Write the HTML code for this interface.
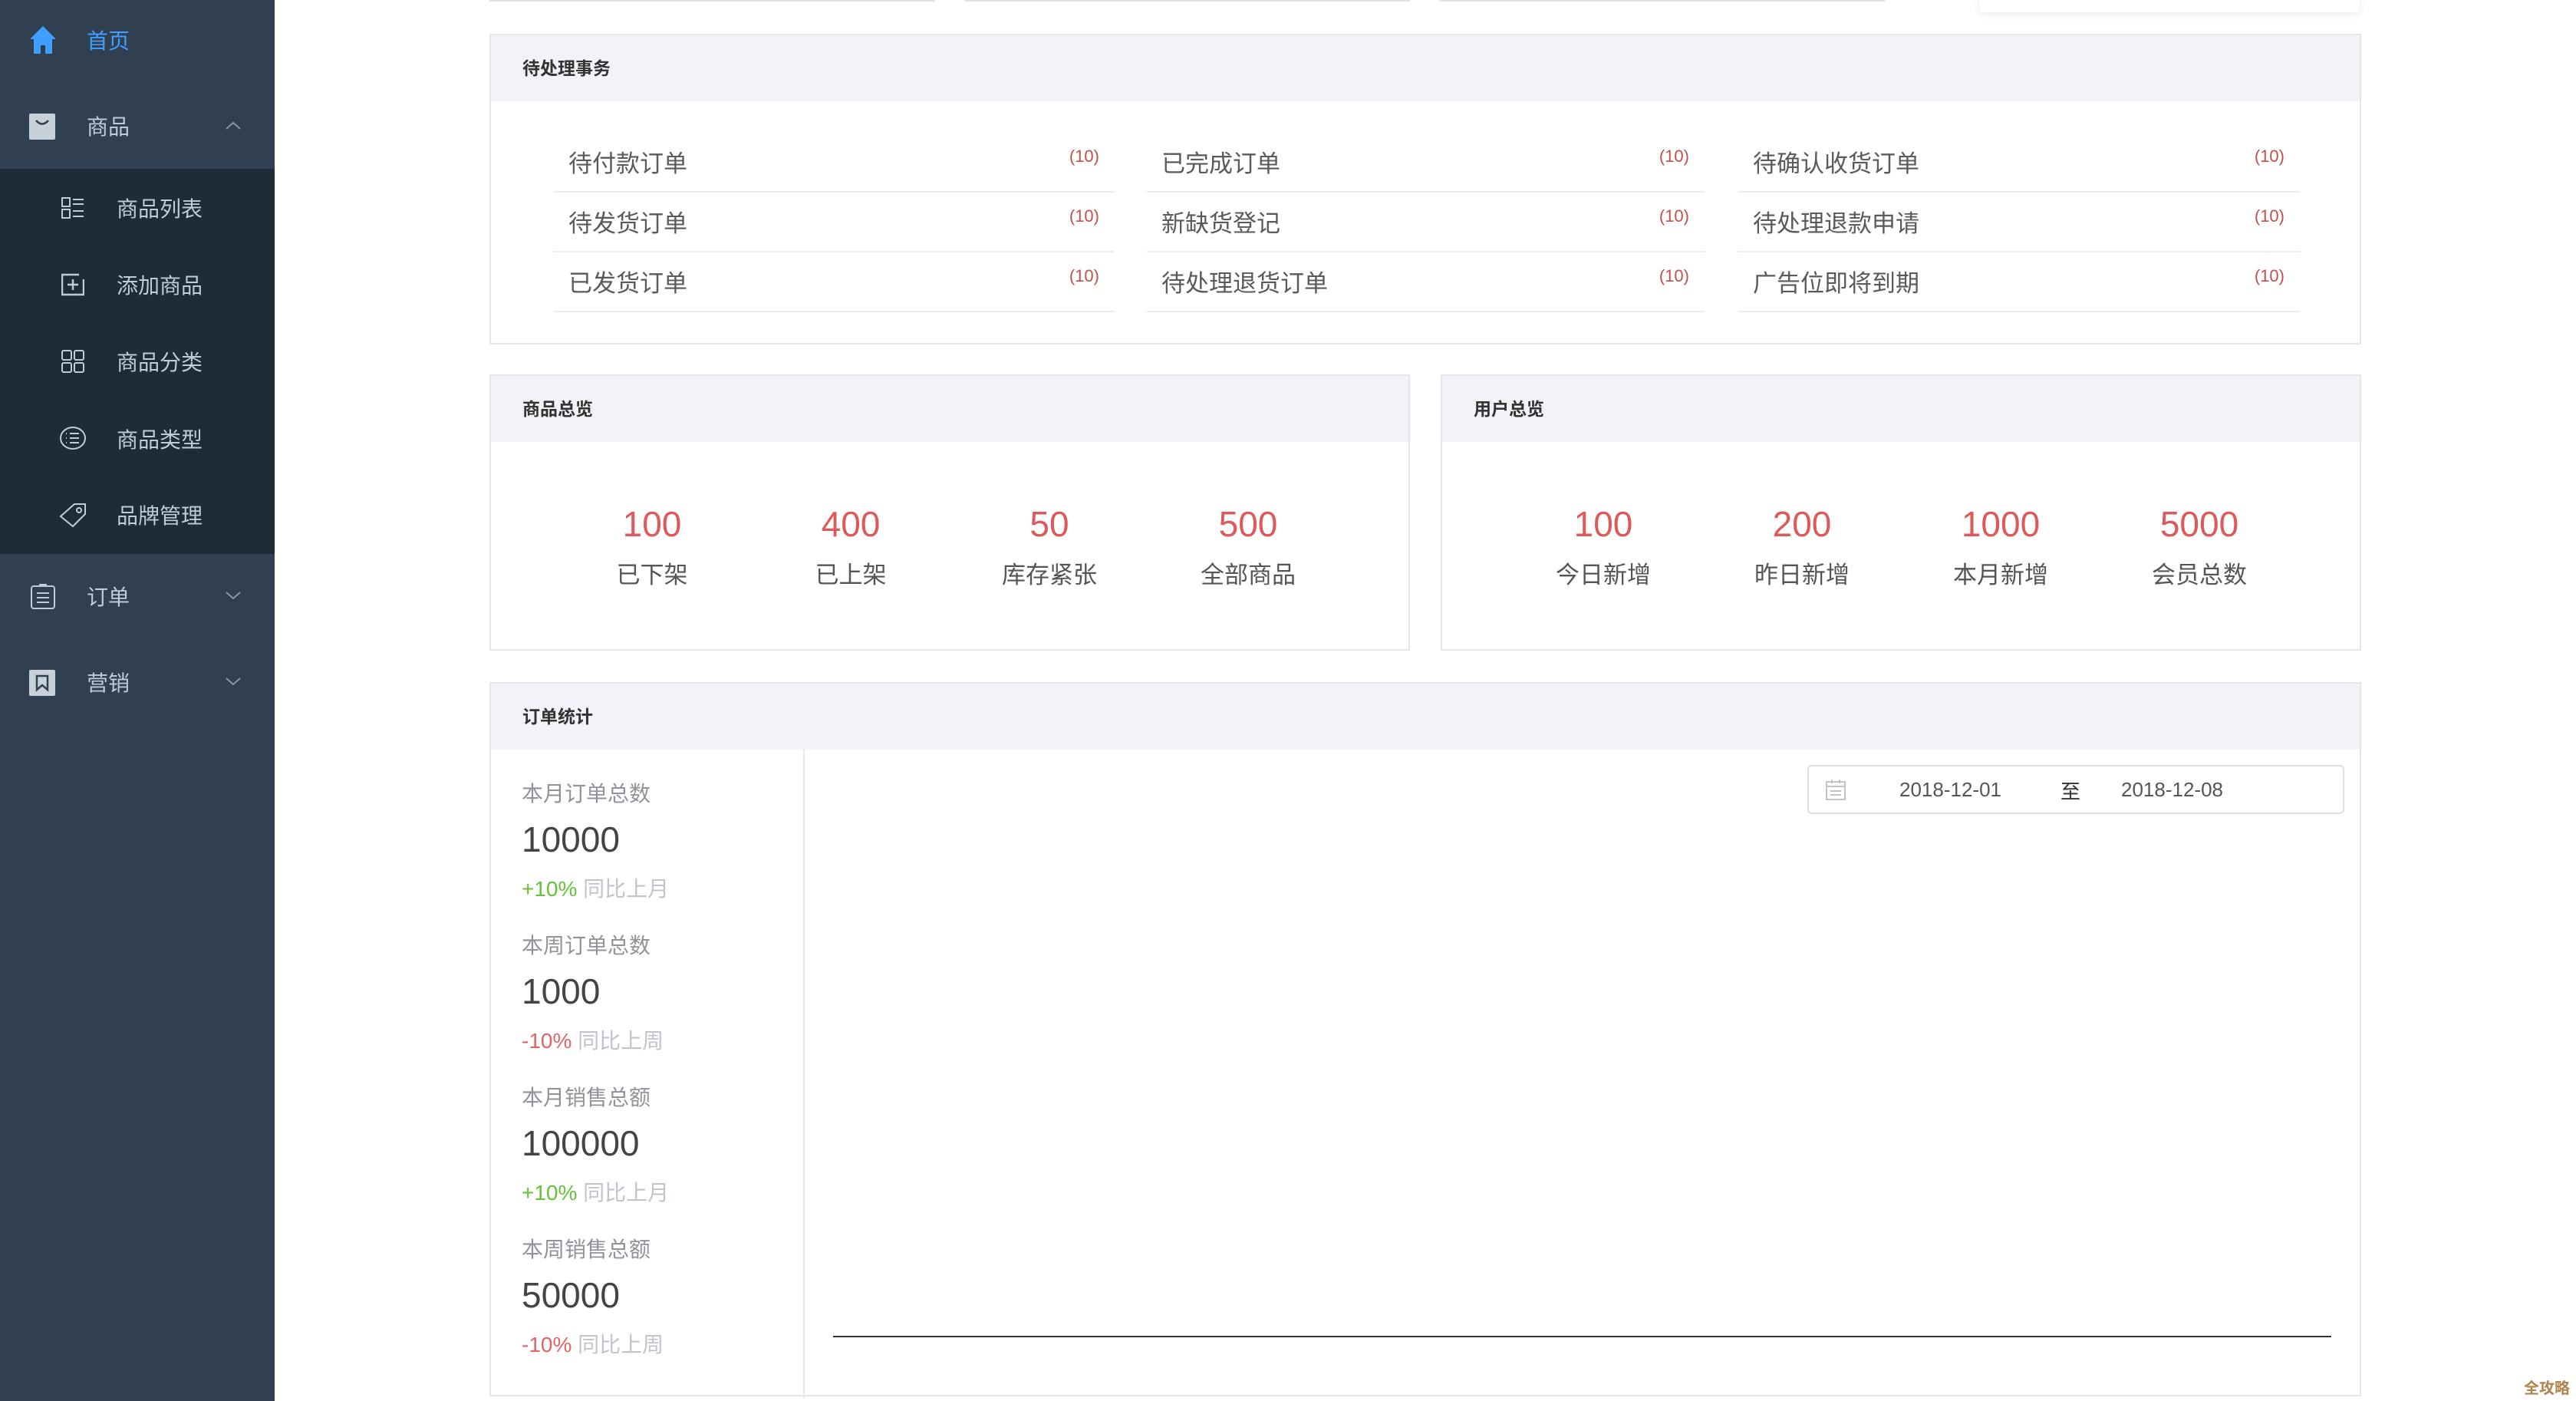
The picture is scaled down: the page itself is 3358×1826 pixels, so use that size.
<!DOCTYPE html>
<html><head><meta charset="utf-8"><style>
*{margin:0;padding:0;box-sizing:border-box}
body{width:3358px;height:1826px;background:#fff;position:relative;overflow:hidden;font-family:"Liberation Sans","Noto Sans CJK SC",sans-serif}
.a{position:absolute}
#side{left:0;top:0;width:358px;height:1826px;background:#304050}
#sub{left:0;top:220px;width:358px;height:502px;background:#1f2b39}
.mt{position:absolute;font-size:28px;color:#bfcbd9;line-height:1}
.panel{position:absolute;border:2px solid #e6e6e6;background:#fff}
.ph{position:absolute;left:0;top:0;right:0;height:86px;background:#f2f2f8;font-size:23px;color:#333;padding-left:41px;line-height:86px}
.row{position:absolute;height:78px;border-bottom:2px solid #ececec}
.row span{position:absolute;left:19px;top:15px;font-size:31px;color:#5a5a5a}
.row i{position:absolute;right:20px;top:18px;font-style:normal;font-size:22px;color:#c0504d}
.num{position:absolute;width:200px;text-align:center;font-size:46px;color:#dd5a5a}
.lab{position:absolute;width:200px;text-align:center;font-size:31px;color:#555}
.sl{position:absolute;left:40px;font-size:28px;color:#909399}
.sn{position:absolute;left:40px;font-size:46px;color:#444}
.sd{position:absolute;left:40px;font-size:28px;color:#c0c4cc}
</style></head><body>
<div id="side" class="a"></div>
<div id="sub" class="a"></div>
<svg class="a" style="left:38px;top:33px" width="36" height="38" viewBox="0 0 36 38"><path d="M18 1L1 18h5v19h9v-11h6v11h9V18h5z" fill="#409eff"/></svg>
<div class="mt" style="left:113px;top:40px;color:#409eff">首页</div>
<svg class="a" style="left:38px;top:148px" width="34" height="34" viewBox="0 0 34 34"><rect width="34" height="34" rx="2" fill="#c8d0d8"/><path d="M9 9q8 9 16 0" stroke="#304050" stroke-width="2.5" fill="none"/></svg>
<div class="mt" style="left:113px;top:152px">商品</div>
<svg class="a" style="left:294px;top:158px" width="20" height="12"><path d="M1 10L10 2l9 8" stroke="#909399" stroke-width="2" fill="none"/></svg>
<svg class="a" style="left:80px;top:257px" width="30" height="28" fill="none" stroke="#bfcbd9" stroke-width="2"><rect x="1" y="1" width="10" height="11"/><rect x="1" y="16" width="10" height="11"/><path d="M15 3h14M15 9h14M15 18h14M15 25h14"/></svg>
<div class="mt" style="left:152px;top:259px">商品列表</div>
<svg class="a" style="left:80px;top:356px" width="30" height="30" fill="none" stroke="#bfcbd9" stroke-width="2.5"><path d="M29 8V28H1V2h22"/><path d="M8 15h14M15 8v14"/></svg>
<div class="mt" style="left:152px;top:359px">添加商品</div>
<svg class="a" style="left:80px;top:456px" width="30" height="30" fill="none" stroke="#bfcbd9" stroke-width="2"><rect x="1" y="1" width="12" height="12" rx="2"/><rect x="17" y="1" width="12" height="12" rx="2"/><rect x="1" y="17" width="12" height="12" rx="2"/><rect x="17" y="17" width="12" height="12" rx="2"/></svg>
<div class="mt" style="left:152px;top:459px">商品分类</div>
<svg class="a" style="left:77px;top:555px" width="36" height="32" fill="none" stroke="#bfcbd9" stroke-width="2"><ellipse cx="18" cy="16" rx="16" ry="14"/><path d="M14 10h12M14 16h12M14 22h12M9 10h1M9 16h1M9 22h1"/></svg>
<div class="mt" style="left:152px;top:560px">商品类型</div>
<svg class="a" style="left:77px;top:653px" width="36" height="36" fill="none" stroke="#bfcbd9" stroke-width="2"><path d="M2 20L20 4h14v13L18 33z"/><circle cx="26" cy="12" r="3"/></svg>
<div class="mt" style="left:152px;top:659px">品牌管理</div>
<svg class="a" style="left:40px;top:760px" width="32" height="34" fill="none" stroke="#bfcbd9" stroke-width="2"><rect x="1" y="4" width="30" height="29" rx="3"/><path d="M11 2h10M8 13h16M8 19h16M8 25h16"/></svg>
<div class="mt" style="left:113px;top:765px">订单</div>
<svg class="a" style="left:294px;top:770px" width="20" height="12"><path d="M1 2l9 8 9-8" stroke="#909399" stroke-width="2" fill="none"/></svg>
<svg class="a" style="left:38px;top:873px" width="34" height="34"><rect width="34" height="34" rx="2" fill="#c8d0d8"/><path d="M10 8h14v18l-7-6-7 6z" stroke="#304050" stroke-width="2.5" fill="none"/></svg>
<div class="mt" style="left:113px;top:877px">营销</div>
<svg class="a" style="left:294px;top:882px" width="20" height="12"><path d="M1 2l9 8 9-8" stroke="#909399" stroke-width="2" fill="none"/></svg>

<div class="a" style="left:638px;top:-10px;width:581px;height:12px;border:2px solid #e2e2e2"></div>
<div class="a" style="left:1257px;top:-10px;width:581px;height:12px;border:2px solid #e2e2e2"></div>
<div class="a" style="left:1876px;top:-10px;width:581px;height:12px;border:2px solid #e2e2e2"></div>
<div class="a" style="left:2580px;top:-10px;width:496px;height:26px;background:#fff;box-shadow:0 3px 10px rgba(0,0,0,.08);border-radius:4px"></div>

<div class="panel" style="left:638px;top:44px;width:2440px;height:405px">
<div class="ph" style="font-weight:bold;">待处理事务</div>
<div class="row" style="left:82px;top:127px;width:731px"><span>待付款订单</span><i>(10)</i></div>
<div class="row" style="left:82px;top:205px;width:731px"><span>待发货订单</span><i>(10)</i></div>
<div class="row" style="left:82px;top:283px;width:731px"><span>已发货订单</span><i>(10)</i></div>
<div class="row" style="left:855px;top:127px;width:727px"><span>已完成订单</span><i>(10)</i></div>
<div class="row" style="left:855px;top:205px;width:727px"><span>新缺货登记</span><i>(10)</i></div>
<div class="row" style="left:855px;top:283px;width:727px"><span>待处理退货订单</span><i>(10)</i></div>
<div class="row" style="left:1626px;top:127px;width:732px"><span>待确认收货订单</span><i>(10)</i></div>
<div class="row" style="left:1626px;top:205px;width:732px"><span>待处理退款申请</span><i>(10)</i></div>
<div class="row" style="left:1626px;top:283px;width:732px"><span>广告位即将到期</span><i>(10)</i></div>
</div>

<div class="panel" style="left:638px;top:488px;width:1200px;height:360px">
<div class="ph" style="font-weight:bold">商品总览</div>
<div class="num" style="left:110px;top:166px">100</div><div class="lab" style="left:110px;top:234px">已下架</div>
<div class="num" style="left:369px;top:166px">400</div><div class="lab" style="left:369px;top:234px">已上架</div>
<div class="num" style="left:628px;top:166px">50</div><div class="lab" style="left:628px;top:234px">库存紧张</div>
<div class="num" style="left:887px;top:166px">500</div><div class="lab" style="left:887px;top:234px">全部商品</div>
</div>
<div class="panel" style="left:1878px;top:488px;width:1200px;height:360px">
<div class="ph" style="font-weight:bold">用户总览</div>
<div class="num" style="left:110px;top:166px">100</div><div class="lab" style="left:110px;top:234px">今日新增</div>
<div class="num" style="left:369px;top:166px">200</div><div class="lab" style="left:369px;top:234px">昨日新增</div>
<div class="num" style="left:628px;top:166px">1000</div><div class="lab" style="left:628px;top:234px">本月新增</div>
<div class="num" style="left:887px;top:166px">5000</div><div class="lab" style="left:887px;top:234px">会员总数</div>
</div>

<div class="panel" style="left:638px;top:889px;width:2440px;height:931px">
<div class="ph" style="font-weight:bold">订单统计</div>
<div class="a" style="left:407px;top:86px;width:2px;height:845px;background:#e6e6e6"></div>
<div class="sl" style="top:122px">本月订单总数</div><div class="sn" style="top:176px">10000</div><div class="sd" style="top:246px"><span style="color:#67c23a">+10%</span> 同比上月</div>
<div class="sl" style="top:320px">本周订单总数</div><div class="sn" style="top:374px">1000</div><div class="sd" style="top:444px"><span style="color:#e06666">-10%</span> 同比上周</div>
<div class="sl" style="top:518px">本月销售总额</div><div class="sn" style="top:572px">100000</div><div class="sd" style="top:642px"><span style="color:#67c23a">+10%</span> 同比上月</div>
<div class="sl" style="top:716px">本周销售总额</div><div class="sn" style="top:770px">50000</div><div class="sd" style="top:840px"><span style="color:#e06666">-10%</span> 同比上周</div>
<div class="a" style="left:1716px;top:106px;width:700px;height:64px;border:2px solid #dcdfe6;border-radius:6px">
<svg class="a" style="left:22px;top:16px" width="26" height="28" fill="none" stroke="#c0c4cc" stroke-width="2"><rect x="1" y="4" width="24" height="23"/><path d="M1 10h24M8 1v5M18 1v5M6 16h14M6 21h14"/></svg>
<div class="a" style="left:118px;top:15px;font-size:26px;color:#555">2018-12-01</div>
<div class="a" style="left:328px;top:13px;font-size:26px;color:#333">至</div>
<div class="a" style="left:407px;top:15px;font-size:26px;color:#555">2018-12-08</div>
</div>
<div class="a" style="left:446px;top:850px;width:1953px;height:2px;background:#333"></div>
</div>
<div class="a" style="left:3290px;top:1793px;font-size:20px;font-weight:bold;color:#b0844a">全攻略</div>
</body></html>
